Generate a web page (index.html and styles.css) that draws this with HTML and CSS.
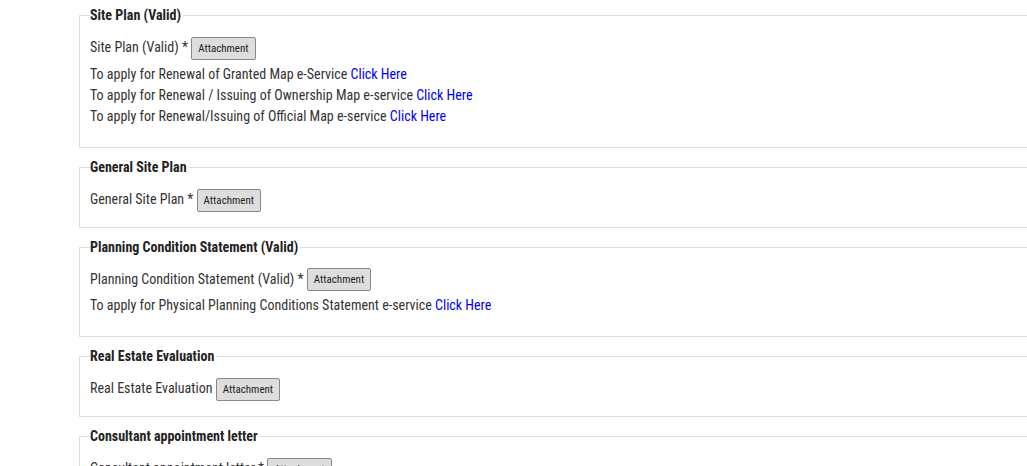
FILE: index.html
```html
<!DOCTYPE html>
<html lang="en">
<head>
    <meta charset="UTF-8">
    <meta name="viewport" content="width=device-width, initial-scale=1.0">
    <title>Attachments</title>
    <link rel="stylesheet" href="styles.css">
</head>
<body>
    <div class="docs">
        <fieldset class="group">
            <legend>Site Plan (Valid)</legend>
            <div class="field">Site Plan (Valid) * <button class="attach">Attachment</button></div>
            <div class="links">
                <div>To apply for Renewal of Granted Map e-Service <a href="#">Click Here</a></div>
                <div>To apply for Renewal / Issuing of Ownership Map e-service <a href="#">Click Here</a></div>
                <div>To apply for Renewal/Issuing of Official Map e-service <a href="#">Click Here</a></div>
            </div>
        </fieldset>

        <fieldset class="group">
            <legend>General Site Plan</legend>
            <div class="field">General Site Plan * <button class="attach">Attachment</button></div>
        </fieldset>

        <fieldset class="group">
            <legend>Planning Condition Statement (Valid)</legend>
            <div class="field">Planning Condition Statement (Valid) * <button class="attach">Attachment</button></div>
            <div class="links">
                <div>To apply for Physical Planning Conditions Statement e-service <a href="#">Click Here</a></div>
            </div>
        </fieldset>

        <fieldset class="group">
            <legend>Real Estate Evaluation</legend>
            <div class="field">Real Estate Evaluation <button class="attach">Attachment</button></div>
        </fieldset>

        <fieldset class="group">
            <legend>Consultant appointment letter</legend>
            <div class="field">Consultant appointment letter * <button class="attach">Attachment</button></div>
        </fieldset>
    </div>
</body>
</html>
```

FILE: styles.css
```css
body { margin: 0; overflow: hidden; font-family: Roboto, "Liberation Sans", sans-serif; font-stretch: 87.5%; font-size: 14px; color: #333; background: #fff; }
.docs { padding: 7px 0 0 79px; width: 1000px; }
.group { margin: 0 0 11px; padding: 0 10px 15px; border: 1px solid #ddd; border-right: none; }
.group legend { padding: 0 2px 0 0; font-weight: bold; font-size: 14px; line-height: 17px; color: #222; }
.field { margin-top: 12px; line-height: 23px; }
.links { margin-top: 4px; margin-bottom: 5px; line-height: 21px; }
.links a { color: #0000ee; text-decoration: none; }
.attach { font-family: inherit; font-stretch: 87.5%; font-size: 11px; height: 23px; padding: 0 6px; background: #ddd; border: 1px solid #888; border-radius: 2px; color: #222; vertical-align: middle; }
```
